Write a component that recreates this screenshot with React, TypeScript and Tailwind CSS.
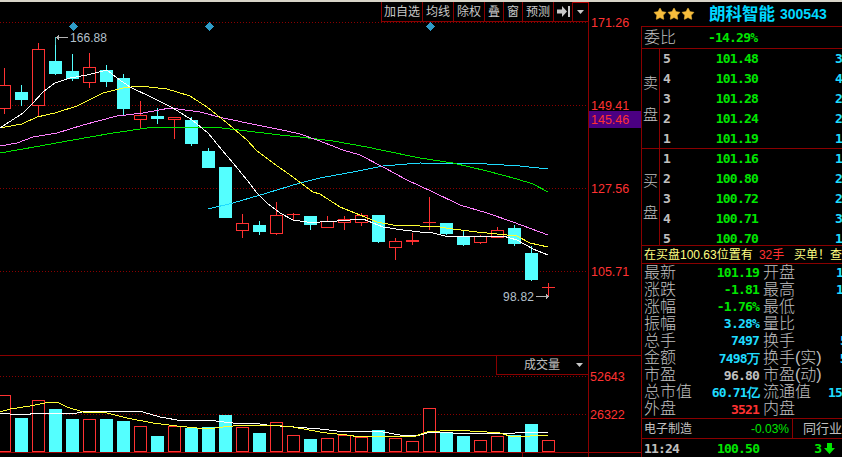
import { Star } from 'lucide-react';

const RED = '#ff3232';
const CYAN = '#54ffff';
const GRID = '#8a0000';

// x = 4.5 + 17 * i
// [top, bottom, wickTop, wickBottom, up]
const candles: [number, number, number, number, boolean][] = [
  [85, 108, 68, 114, true],
  [92, 100, 85, 106, false],
  [49, 105, 43, 116, true],
  [61, 74, 37, 75, false],
  [71, 79, 54, 81, false],
  [67, 82, 53, 88, true],
  [70, 82, 65, 87, false],
  [78, 109, 74, 116, false],
  [115, 119, 101, 129, true],
  [116, 119, 108, 124, false],
  [117, 119, 117, 139, true],
  [120, 144, 117, 146, false],
  [151, 168, 148, 168, false],
  [167, 218, 167, 218, false],
  [223, 230, 214, 238, true],
  [225, 232, 221, 235, false],
  [215, 233, 202, 235, true],
  [214, 214, 213, 220, true],
  [216, 225, 216, 230, false],
  [221, 227, 216, 227, true],
  [219, 222, 216, 230, true],
  [215, 222, 213, 226, true],
  [215, 242, 215, 243, false],
  [241, 247, 238, 260, true],
  [240, 241, 233, 245, true],
  [222, 222, 197, 230, true],
  [223, 234, 223, 235, false],
  [237, 245, 230, 246, false],
  [236, 242, 235, 244, true],
  [230, 237, 227, 238, true],
  [228, 244, 225, 246, false],
  [253, 280, 246, 281, false],
  [287, 287, 283, 296, true],
];

// tops of the volume bars, same order as candles
const volumes = [
  395, 418, 400, 409, 419, 419, 419, 421, 426, 436, 426, 428, 427, 415, 427, 433, 422, 435, 439, 438, 435, 437, 430,
  438, 441, 408, 433, 436, 440, 436, 435, 424, 440,
];

const ma5 =
  '0,128 23,113 33,103 43,92 55,83 70,78 87,75 107,70 117,78 130,87 153,98 173,108 192,120 208,133 222,150 233,163 247,180 257,193 267,203 280,213 293,220 307,222 320,222 337,221 363,219 383,227 403,230 420,232 433,233 445,236 477,236 503,236 517,240 533,249 548,255';
const ma10 =
  '0,128 22,124 37,117 55,113 77,106 103,93 123,88 140,86 167,89 190,96 207,107 227,123 247,140 256,150 273,163 293,177 313,192 320,194 340,207 360,215 377,222 393,225 420,226 433,226 453,229 477,232 497,234 517,236 530,243 548,247';
const ma20 =
  '0,146 17,143 33,137 57,133 83,125 117,116 143,113 170,108 200,112 223,118 257,125 287,131 300,134 317,140 343,150 360,155 383,167 407,180 433,192 460,205 487,213 513,222 548,235';
const ma30 =
  '0,153 40,146 73,140 113,133 147,128 173,127 213,127 247,131 280,135 300,137 333,141 367,147 381,150 420,158 453,163 487,171 517,179 533,184 548,192';
const ma60 = '208,209 233,203 267,193 300,183 320,178 353,172 383,166 420,163 487,164 520,166 548,169';

const volWhite =
  '0,413 10,414 30,414 30,413 77,413 87,411 115,411 143,412 160,417 183,421 207,420 233,423 252,423 267,425 320,429 337,431 353,431 383,432 400,435 417,436 430,432 453,433 473,434 490,433 507,434 523,432 548,433';
const volYellow =
  '0,412 10,409 30,406 50,402 57,402 67,407 83,412 107,413 127,418 153,423 177,426 197,428 207,429 223,427 243,425 270,425 293,427 320,432 327,433 347,435 360,437 387,436 413,437 427,432 453,430 487,432 500,433 513,437 548,435';

const toolbar = [
  { label: '加自选', w: 'w-[41px]' },
  { label: '均线', w: 'w-[31px]' },
  { label: '除权', w: 'w-[31px]' },
  { label: '叠', w: 'w-[19px]' },
  { label: '窗', w: 'w-[19px]' },
  { label: '预测', w: 'w-[31px]' },
];

const sell = [
  ['5', '101.48', '3'],
  ['4', '101.30', '4'],
  ['3', '101.28', '2'],
  ['2', '101.24', '2'],
  ['1', '101.19', '1'],
];
const buy = [
  ['1', '101.16', '1'],
  ['2', '100.80', '2'],
  ['3', '100.72', '2'],
  ['4', '100.71', '3'],
  ['5', '100.70', '1'],
];

const stats = [
  ['最新', '101.19', 'text-[#00e600]', '开盘', '1', 'pl-[41px]'],
  ['涨跌', '-1.81', 'text-[#00e600]', '最高', '1', 'pl-[41px]'],
  ['涨幅', '-1.76%', 'text-[#00e600]', '最低', '', 'pl-0'],
  ['振幅', '3.28%', 'text-[#1fdcff]', '量比', '', 'pl-0'],
  ['总手', '7497', 'text-[#1fdcff]', '换手', '5', 'pl-[45px]'],
  ['金额', '7498万', 'text-[#1fdcff]', '换手(实)', '5', 'pl-[18px]'],
  ['市盈', '96.80', 'text-[#c0c0c0]', '市盈(动)', '', 'pl-0'],
  ['总市值', '60.71亿', 'text-[#1fdcff]', '流通值', '15', 'pl-[17px]'],
  ['外盘', '3521', 'text-[#ff3232]', '内盘', '', 'pl-0'],
];

const mono = "font-['DejaVu_Sans_Mono',monospace] font-bold text-[13px] tracking-[-0.8px]";

function OrderRows({ rows }: { rows: string[][] }) {
  return (
    <div className={`flex-1 flex flex-col overflow-hidden ${mono}`}>
      {rows.map(([n, price, vol]) => (
        <div key={n} className="h-[20px] shrink-0 flex items-center pl-[3px]">
          <span className="w-[32px] text-[#c0c0c0]">{n}</span>
          <span className="w-[64px] text-right text-[#00e600]">{price}</span>
          <span className="ml-[77px] text-[#1fdcff]">{vol}</span>
        </div>
      ))}
    </div>
  );
}

function SideLabel({ a, b }: { a: string; b: string }) {
  return (
    <div className="w-[18px] shrink-0 border-r border-[#8a0000] flex flex-col items-center justify-center gap-[8px] text-[15px] font-light leading-[24px] text-[#c0c0c0]">
      <span>{a}</span>
      <span>{b}</span>
    </div>
  );
}

export default function App() {
  return (
    <div
      className="w-[842px] h-[457px] bg-black overflow-hidden flex flex-col"
      style={{ fontFamily: '"Liberation Sans", "Noto Sans CJK SC", sans-serif' }}
    >
      <div className="h-[2px] shrink-0 bg-[#d8d4c8]" />
      <div className="flex-1 flex min-h-0">
        {/* Chart panes and price axis */}
        <div className="w-[641px] shrink-0 relative flex flex-col">
          <svg width="641" height="353" viewBox="0 2 641 353" className="block" shapeRendering="crispEdges">
            {[22.5, 105.5, 188.5, 271.5].map((y) => (
              <line key={y} x1="0" x2="588" y1={y} y2={y} stroke={GRID} strokeDasharray="1 2" />
            ))}
            <line x1="588.5" x2="588.5" y1="2" y2="355" stroke={GRID} />
            {[73, 209, 430].map((x) => (
              <polygon key={x} points={`${x},22 ${x + 4.5},26.5 ${x},31 ${x - 4.5},26.5`} fill="#2e9cc8" />
            ))}
            {candles.map(([top, bottom, wt, wb, up], i) => {
              const x = 4 + 17 * i;
              const color = up ? RED : CYAN;
              return (
                <g key={i}>
                  <rect x={x} y={wt} width="1" height={wb - wt} fill={color} />
                  {up ? (
                    bottom === top ? (
                      <rect x={x - 6} y={top} width="13" height="1" fill={color} />
                    ) : bottom - top < 2 ? (
                      <rect x={x - 6} y={top} width="13" height="2" fill={color} />
                    ) : (
                      <rect x={x - 5.5} y={top + 0.5} width="12" height={bottom - top} fill="#000" stroke={color} />
                    )
                  ) : (
                    <rect x={x - 6} y={top} width="13" height={bottom - top} fill={color} />
                  )}
                </g>
              );
            })}
            <g fill="none" strokeWidth="1">
              <polyline points={ma60} stroke="#1fdcff" />
              <polyline points={ma30} stroke="#00e600" />
              <polyline points={ma20} stroke="#ff80ff" />
              <polyline points={ma10} stroke="#ffff32" />
              <polyline points={ma5} stroke="#ffffff" />
            </g>
            {/* high / low markers */}
            <g fill="#b4b4b4">
              <rect x="55" y="37" width="1" height="8" fill="#54c8c8" />
              <rect x="57" y="37" width="11" height="1" />
              <polygon points="56,37.5 59,35 59,40" />
              <rect x="536" y="296" width="11" height="1" />
              <polygon points="549,296.5 546,294 546,299" />
            </g>
            <g fontFamily="Liberation Sans" fontSize="12" fill="#b4c0cc">
              <text x="70" y="42" textLength="37">166.88</text>
              <text x="503" y="301" textLength="31">98.82</text>
            </g>
            <rect x="589" y="111" width="53" height="17" fill="#4b0082" />
            <g fontFamily="Liberation Sans" fontSize="12.5" fill={RED} shapeRendering="auto">
              <text x="591" y="27">171.26</text>
              <text x="591" y="110">149.41</text>
              <text x="591" y="124">145.46</text>
              <text x="591" y="193">127.56</text>
              <text x="591" y="276">105.71</text>
            </g>
          </svg>
          <svg width="641" height="102" viewBox="0 355 641 102" className="block" shapeRendering="crispEdges">
            <line x1="0" x2="641" y1="355.5" y2="355.5" stroke={GRID} />
            <line x1="0" x2="641" y1="452.5" y2="452.5" stroke="#a00000" />
            {[376.5, 414.5].map((y) => (
              <line key={y} x1="0" x2="588" y1={y} y2={y} stroke={GRID} strokeDasharray="1 2" />
            ))}
            <line x1="588.5" x2="588.5" y1="355" y2="457" stroke={GRID} />
            <line x1="522.5" x2="522.5" y1="452" y2="457" stroke={GRID} />
            {volumes.map((top, i) => {
              const x = 4 + 17 * i;
              return candles[i][4] ? (
                <rect key={i} x={x - 5.5} y={top + 0.5} width="12" height={451 - top} fill="#000" stroke={RED} />
              ) : (
                <rect key={i} x={x - 6} y={top} width="13" height={452 - top} fill={CYAN} />
              );
            })}
            <polyline points={volWhite} fill="none" stroke="#ffffff" />
            <polyline points={volYellow} fill="none" stroke="#ffff32" />
            <g fontFamily="Liberation Sans" fontSize="12.5" fill={RED} shapeRendering="auto">
              <text x="590" y="381">52643</text>
              <text x="590" y="419">26322</text>
            </g>
          </svg>

          {/* Toolbar over the chart */}
          <div className="absolute top-0 left-[381px] w-[208px] h-[20px] flex border-b border-[#8a0000] border-l text-[12px] text-[#c8c8c8]">
            {toolbar.map((t) => (
              <div key={t.label} className={`${t.w} shrink-0 flex items-center justify-center border-r border-[#8a0000]`}>
                {t.label}
              </div>
            ))}
            <div className="w-[19px] shrink-0 flex items-center justify-center border-r border-[#8a0000]">
              <svg width="13" height="11" viewBox="0 0 13 11" fill="#c8c8c8">
                <path d="M0 3.5h5V0l5 5.5-5 5.5V7.5H0z" />
                <rect x="11" y="0" width="2" height="11" />
              </svg>
            </div>
            <div className="flex-1 flex items-center justify-center border-t border-r border-[#b00000]">
              <svg width="7" height="4" viewBox="0 0 7 4" fill="#c8c8c8">
                <path d="M0 0h7L3.5 4z" />
              </svg>
            </div>
          </div>

          {/* Indicator selector */}
          <div className="absolute top-[353px] left-[496px] w-[93px] h-[20px] border-l border-b border-[#8a0000] flex items-center pl-[27px] text-[12px] text-[#c0c0c0]">
            <span>成交量</span>
            <svg className="ml-[16px]" width="7" height="4" viewBox="0 0 7 4" fill="#c8c8c8">
              <path d="M0 0h7L3.5 4z" />
            </svg>
          </div>
        </div>

        {/* Quote panel */}
        <div className="flex-1 min-w-0 overflow-hidden flex flex-col">
          <div className="h-[24px] shrink-0 flex items-center pl-[12px]">
            <div className="flex -mt-[1px]">
              {[0, 1, 2].map((i) => (
                <Star key={i} size={14} fill="#f7bd3c" stroke="#f7bd3c" strokeWidth={1} />
              ))}
            </div>
            <span className="ml-[14px] text-[16.5px] font-bold text-[#00d8ff] whitespace-nowrap">朗科智能</span>
            <span className="ml-[5px] text-[14px] font-bold text-[#00d8ff]">300543</span>
          </div>
          <div className="flex-1 min-h-0 border-l border-t border-[#8a0000] flex flex-col">
            <div className="h-[22px] shrink-0 flex items-center border-b border-[#8a0000] pl-[2px]">
              <span className="w-[64px] text-[16px] font-light text-[#c0c0c0]">委比</span>
              <span className={`${mono} text-[#00e600]`}>-14.29%</span>
            </div>
            <div className="h-[100px] shrink-0 flex border-b border-[#8a0000]">
              <SideLabel a="卖" b="盘" />
              <OrderRows rows={sell} />
            </div>
            <div className="h-[97px] shrink-0 flex border-b border-[#8a0000]">
              <SideLabel a="买" b="盘" />
              <OrderRows rows={buy} />
            </div>
            <div className="h-[18px] shrink-0 flex items-center pl-[2px] border-b border-[#8a0000] text-[12px] whitespace-nowrap text-[#ffff80]">
              <span className="w-[118px]">在买盘100.63位置有</span>
              <span className="w-[36px] text-[#ff3232]">32手</span>
              <span>买单！查</span>
            </div>
            <div className="h-[155px] shrink-0 flex flex-col border-b border-[#8a0000] text-[#c0c0c0] overflow-hidden">
              {stats.map(([l1, v, color, l2, v2, pad]) => (
                <div key={l1} className="flex-1 min-h-0 flex items-center pl-[2px] whitespace-nowrap leading-none">
                  <span className="w-[48px] shrink-0 text-[16px] font-light">{l1}</span>
                  <span className={`w-[67px] shrink-0 text-right ${mono} ${color}`}>{v}</span>
                  <span className="ml-[4px] shrink-0 text-[16px] font-light">{l2}</span>
                  {v2 && <span className={`${pad} ${mono} text-[#1fdcff]`}>{v2}</span>}
                </div>
              ))}
            </div>
            <div className="h-[20px] shrink-0 flex items-center border-b border-[#8a0000] pl-[2px] whitespace-nowrap">
              <span className="w-[51px] text-[12px] text-[#c0c0c0]">电子制造</span>
              <span className="w-[103px] text-right text-[12px] text-[#00e600]">-0.03%</span>
              <span className="ml-[3px] h-full border-l border-[#8a0000] pl-[10px] flex items-center text-[13px] text-[#c0c0c0]">
                同行业
              </span>
            </div>
            <div className={`flex-1 flex items-center pl-[2px] whitespace-nowrap ${mono}`}>
              <span className="w-[73px] text-[#c0c0c0]">11:24</span>
              <span className="text-[#00e600]">100.50</span>
              <span className="ml-[55px] text-[#00e600]">3</span>
              <svg className="ml-[3px]" width="11" height="11" viewBox="0 0 11 11" fill="#00e600">
                <path d="M3 0h5v5h3l-5.5 6L0 5h3z" />
              </svg>
            </div>
          </div>
        </div>
      </div>
    </div>
  );
}
